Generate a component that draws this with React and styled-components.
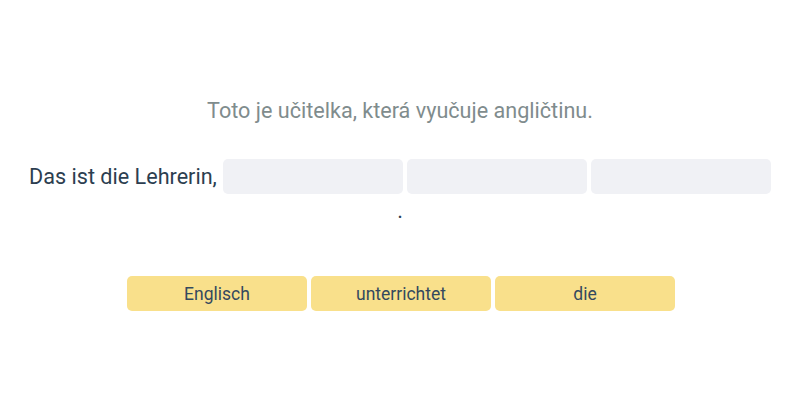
import React from 'react';
import styled, { createGlobalStyle } from 'styled-components';

const GlobalStyle = createGlobalStyle`
    body {
        margin: 0;
        background: #ffffff;
        font-family: Roboto, "Noto Sans", sans-serif;
    }
`;

const Page = styled.div`
    width: 800px;
    height: 400px;
    display: flex;
    flex-direction: column;
    align-items: center;
    padding-top: 98px;
    box-sizing: border-box;
`;

const Prompt = styled.div`
    font-size: 21.6px;
    line-height: 26px;
    color: #7f8c8d;
    text-align: center;
`;

const Sentence = styled.div`
    margin-top: 35px;
    width: 748px;
    display: flex;
    flex-wrap: wrap;
    justify-content: center;
    align-items: center;
    column-gap: 4px;
    row-gap: 4px;
    font-size: 21.6px;
    color: #2c3e50;
`;

const Word = styled.span`
    line-height: 26px;
    margin-right: 2px;
`;

const Period = styled.span`
    line-height: 26px;
    color: #2c3e50;
`;

const Blank = styled.div`
    width: 180px;
    height: 35px;
    border-radius: 5px;
    background: #f0f1f5;
`;

const Bank = styled.div`
    margin-top: 52px;
    padding-left: 2px;
    display: flex;
    gap: 4px;
`;

const Chip = styled.button`
    width: 180px;
    height: 35px;
    border: none;
    border-radius: 5px;
    background: #f9e08b;
    color: #34495e;
    font-family: Roboto, "Noto Sans", sans-serif;
    font-size: 17.5px;
    padding: 0;
    cursor: pointer;
`;

const blanks = [0, 1, 2];
const words = ['Englisch', 'unterrichtet', 'die'];

export default function App() {
    return (
        <React.Fragment>
            <GlobalStyle />
            <Page>
                <Prompt>Toto je učitelka, která vyučuje angličtinu.</Prompt>
                <Sentence>
                    <Word>Das ist die Lehrerin,</Word>
                    {blanks.map((b) => (
                        <Blank key={b} />
                    ))}
                    <Period>.</Period>
                </Sentence>
                <Bank>
                    {words.map((w) => (
                        <Chip key={w}>{w}</Chip>
                    ))}
                </Bank>
            </Page>
        </React.Fragment>
    );
}
